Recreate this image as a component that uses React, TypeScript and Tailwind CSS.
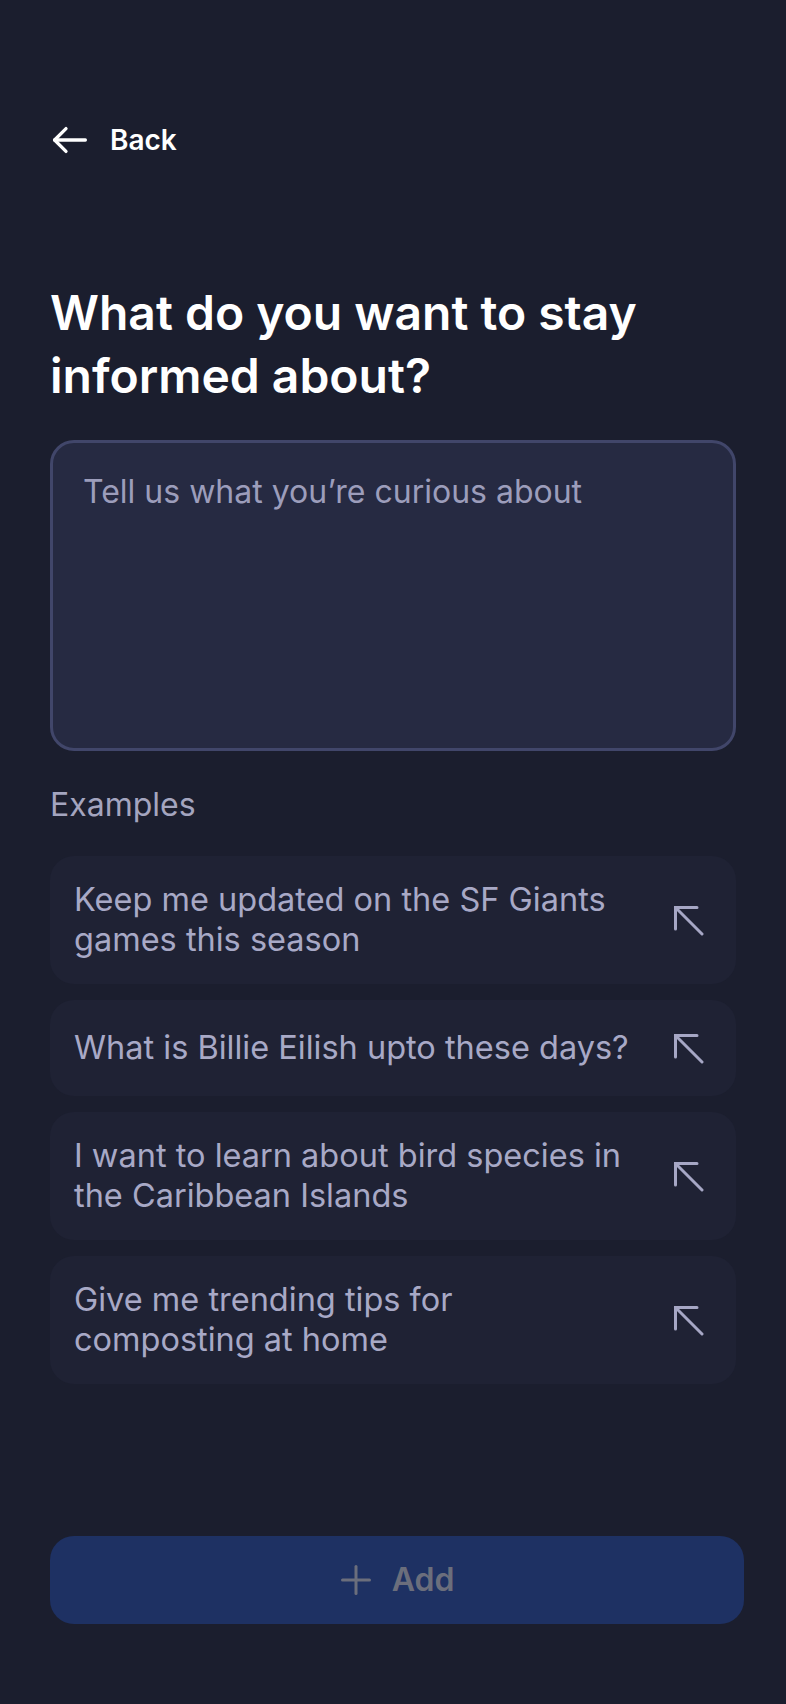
import React from 'react';

const examples = [
  'Keep me updated on the SF Giants games this season',
  'What is Billie Eilish upto these days?',
  'I want to learn about bird species in the Caribbean Islands',
  'Give me trending tips for composting at home',
];

function ArrowUpLeft() {
  return (
    <svg width="32" height="32" viewBox="0 0 32 32" fill="none" stroke="#a6a7c5" strokeWidth={3} strokeLinecap="round">
      <path d="M3.5 25V3.5H25" strokeLinejoin="miter" />
      <path d="M3.5 3.5L30 30" />
    </svg>
  );
}

export default function App() {
  return (
    <div
      className="h-[1704px] w-full bg-[#1b1e2e] flex flex-col px-[50px]"
      style={{ fontFamily: 'Inter, "Noto Sans", sans-serif' }}
    >
      {/* Back */}
      <div className="pt-[120px] flex items-center h-[160px] gap-[20px] text-white">
        <svg width="40" height="30" viewBox="0 0 40 30" fill="none" stroke="currentColor" strokeWidth={3.3} strokeLinecap="round" strokeLinejoin="round">
          <path d="M16 3.6L4.6 15L16 26.4" />
          <path d="M4.6 15H35.4" />
        </svg>
        <span className="text-[28px] font-semibold leading-[40px]">Back</span>
      </div>

      {/* Heading */}
      <h1 className="mt-[121px] text-[48px] leading-[63px] font-semibold text-white">
        What do you want to stay informed about?
      </h1>

      {/* Input */}
      <textarea
        className="mt-[33px] h-[311px] w-full resize-none rounded-[24px] border-[3px] border-[#41466a] bg-[#262a42] px-[30px] pt-[29px] text-[32px] leading-[40px] text-white outline-none placeholder:text-[#9c9dbb]"
        placeholder="Tell us what you’re curious about"
      />

      {/* Examples */}
      <p className="mt-[34px] text-[32px] leading-[40px] text-[#a4a5bf]">Examples</p>
      <div className="mt-[31px] flex flex-col gap-4">
        {examples.map((e) => (
          <div key={e} className="flex items-center gap-8 rounded-[24px] bg-[#1f2234] px-6 py-6">
            <span className="flex-1 text-[32.5px] leading-[40px] text-[#a8a9c6]">{e}</span>
            <div className="w-12 h-12 flex items-center justify-center shrink-0">
              <ArrowUpLeft />
            </div>
          </div>
        ))}
      </div>

      {/* Add */}
      <button className="mt-auto mb-[80px] w-[694px] h-[88px] shrink-0 rounded-[24px] bg-[#1e3163] flex items-center justify-center gap-[20px] text-[#6b6e7c]">
        <svg width="32" height="32" viewBox="0 0 32 32" fill="none" stroke="currentColor" strokeWidth={3} strokeLinecap="round">
          <path d="M16 2.5V29.5" />
          <path d="M2.5 16H29.5" />
        </svg>
        <span className="text-[32px] font-semibold leading-[40px]">Add</span>
      </button>
    </div>
  );
}
